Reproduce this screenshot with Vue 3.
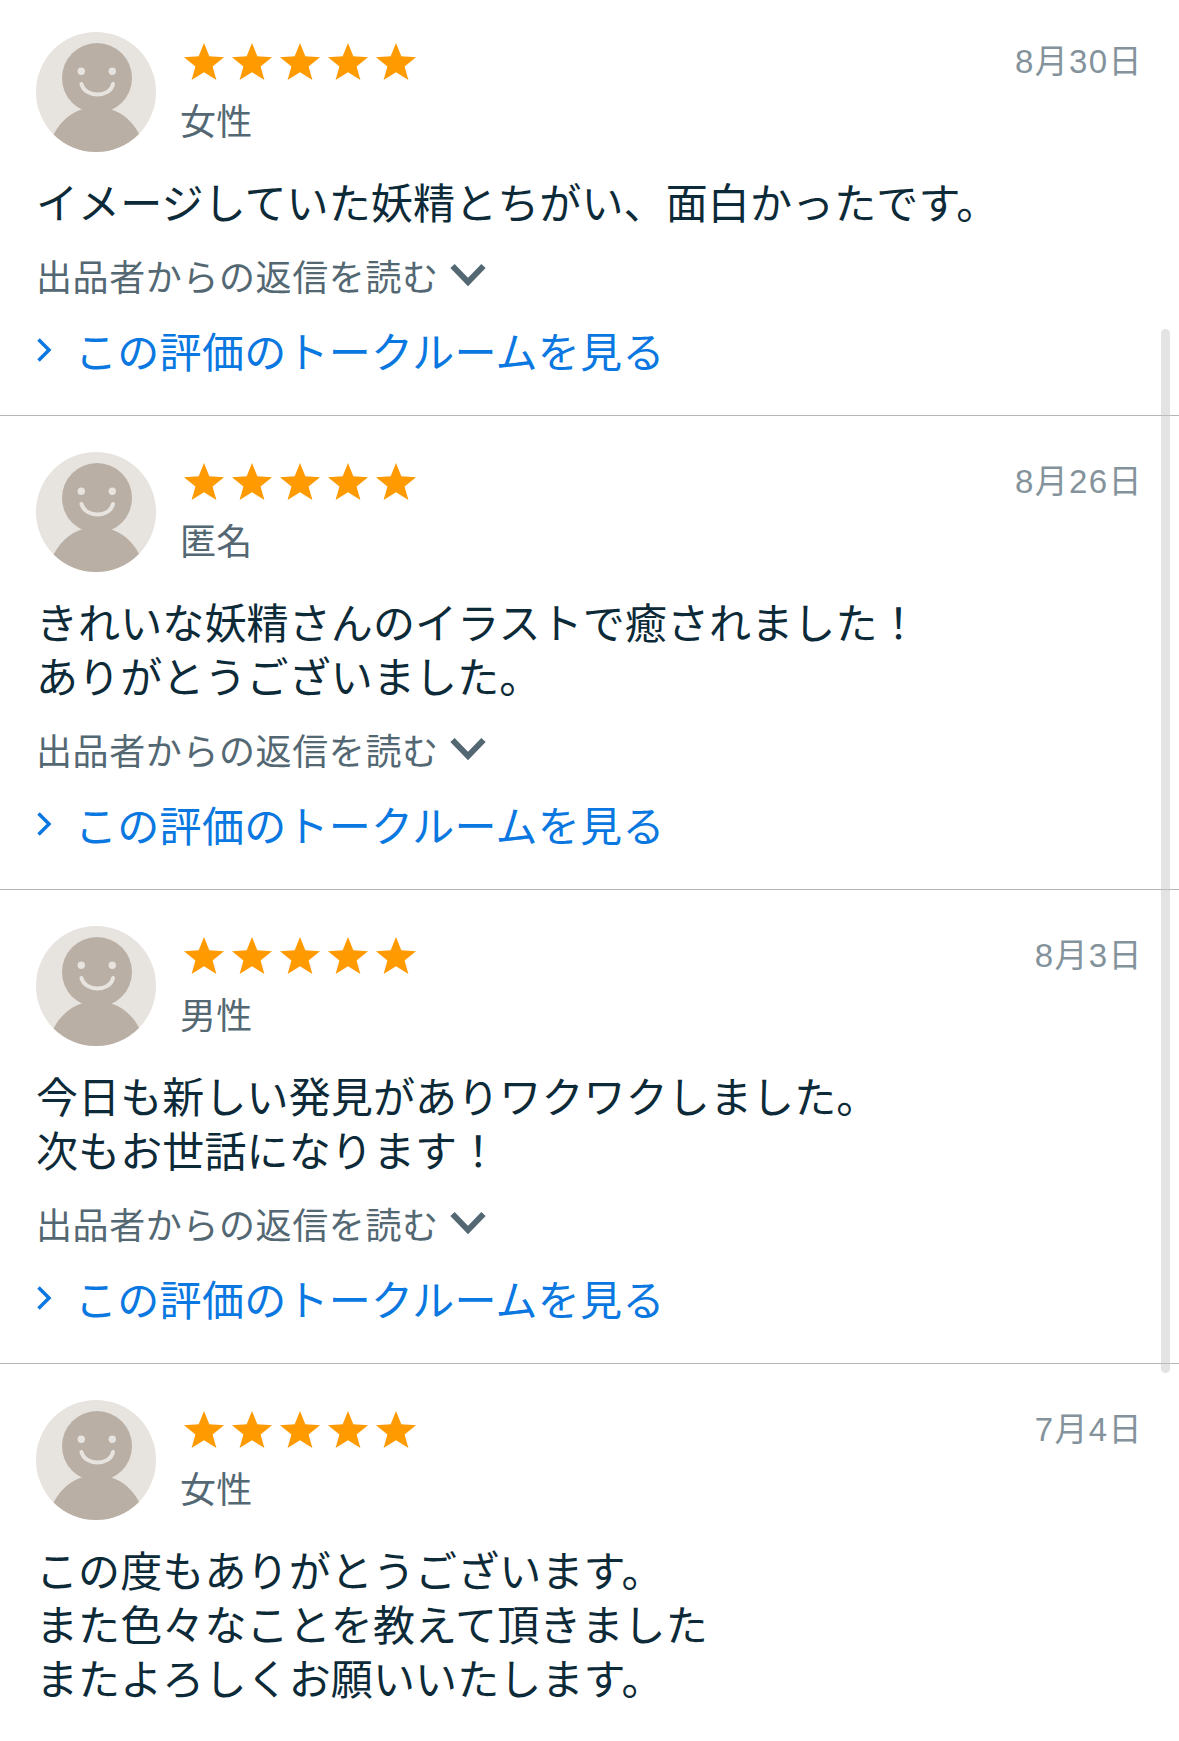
<script setup>
const reviews = [
  { id: 1, who: '女性', date: '8月30日', lines: ['イメージしていた妖精とちがい、面白かったです。'], more: true },
  { id: 2, who: '匿名', date: '8月26日', lines: ['きれいな妖精さんのイラストで癒されました！', 'ありがとうございました。'], more: true },
  { id: 3, who: '男性', date: '8月3日', lines: ['今日も新しい発見がありワクワクしました。', '次もお世話になります！'], more: true },
  { id: 4, who: '女性', date: '7月4日', lines: ['この度もありがとうございます。', 'また色々なことを教えて頂きました', 'またよろしくお願いいたします。'], more: false }
]
</script>

<template>
  <div class="page">
    <div v-for="r in reviews" :key="r.id" class="review">
      <div class="head">
        <svg class="avatar" viewBox="0 0 120 120">
          <defs>
            <clipPath :id="'clip' + r.id"><circle cx="60" cy="60" r="60" /></clipPath>
          </defs>
          <circle cx="60" cy="60" r="60" fill="#e7e3df" />
          <g :clip-path="'url(#clip' + r.id + ')'">
            <circle cx="61" cy="46" r="35" fill="#baafa4" />
            <ellipse cx="60.500" cy="125" rx="48" ry="50" fill="#baafa4" />
          </g>
          <circle cx="45.300" cy="39.300" r="3.700" fill="#e7e3df" />
          <circle cx="76.300" cy="39.300" r="3.700" fill="#e7e3df" />
          <path d="M45.500 52 C49 66 74 66 77 52" fill="none" stroke="#e7e3df" stroke-width="4" stroke-linecap="round" />
        </svg>
        <div class="meta">
          <div class="stars">
            <svg v-for="n in 5" :key="n" class="star" viewBox="0 0 40 37">
              <path d="M20 0 L25.300 13.300 L40 14.200 L28.600 23.400 L32.400 37 L20 29.300 L7.600 37 L11.400 23.400 L0 14.200 L14.700 13.300 Z" fill="#ff9a00" />
            </svg>
          </div>
          <div class="who">{{ r.who }}</div>
        </div>
        <div class="date">{{ r.date }}</div>
      </div>
      <p class="body">
        <span v-for="l in r.lines" :key="l" class="line">{{ l }}</span>
      </p>
      <template v-if="r.more">
        <div class="reply">
          <span>出品者からの返信を読む</span>
          <svg class="down" viewBox="0 0 38 26">
            <path d="M3.500 4 L19 20 L34.500 4" fill="none" stroke="#546873" stroke-width="6" />
          </svg>
        </div>
        <a class="talk">
          <svg class="right" viewBox="0 0 16 26">
            <path d="M2.500 2.500 L13 13 L2.500 23.500" fill="none" stroke="#0a78e0" stroke-width="3.500" />
          </svg>
          <span>この評価のトークルームを見る</span>
        </a>
      </template>
    </div>
    <div class="scrollbar"></div>
  </div>
</template>

<style scoped>
.page {
  position: relative;
  height: 1741px;
  overflow: hidden;
  background: #fff;
  font-family: "Noto Sans CJK JP", "Liberation Sans", sans-serif;
}

.scrollbar {
  position: absolute;
  left: 1161px;
  top: 329px;
  width: 9px;
  height: 1044px;
  border-radius: 5px;
  background: rgba(200, 200, 200, 0.5);
}

.review {
  padding: 36px 36px 38px;
  border-bottom: 1px solid #b5b5b5;
}

.review:first-child {
  padding-top: 32px;
}

.review:nth-child(4) {
  border-bottom: none;
}

.head {
  display: flex;
  align-items: flex-start;
  height: 120px;
}

.avatar {
  width: 120px;
  height: 120px;
  flex-shrink: 0;
}

.meta {
  margin-left: 24px;
  flex: 1;
}

.stars {
  display: flex;
  gap: 8px;
  margin: 11px 0 0 4px;
}

.star {
  width: 40px;
  height: 37px;
}

.who {
  margin-top: 17px;
  font-size: 36px;
  line-height: 44px;
  letter-spacing: 0.3px;
  color: #546873;
}

.date {
  margin: 10px 0 0 0;
  font-family: "Liberation Sans", "Noto Sans CJK JP", sans-serif;
  font-size: 33px;
  line-height: 40px;
  letter-spacing: 1.4px;
  color: #84939b;
}

.body {
  margin: 22px 0 0;
  font-size: 42px;
  line-height: 54px;
  letter-spacing: 0.12px;
  color: #0d2a38;
}

.line {
  display: block;
}

.reply {
  display: flex;
  align-items: center;
  gap: 10px;
  margin-top: 24px;
  font-size: 36px;
  line-height: 46px;
  letter-spacing: 0.6px;
  color: #546873;
}

.down {
  width: 38px;
  height: 26px;
}

.talk {
  display: flex;
  align-items: center;
  gap: 23px;
  margin-top: 25px;
  font-size: 42px;
  line-height: 54px;
  letter-spacing: 0.3px;
  color: #0a78e0;
}

.right {
  width: 16px;
  height: 26px;
  flex-shrink: 0;
}
</style>
